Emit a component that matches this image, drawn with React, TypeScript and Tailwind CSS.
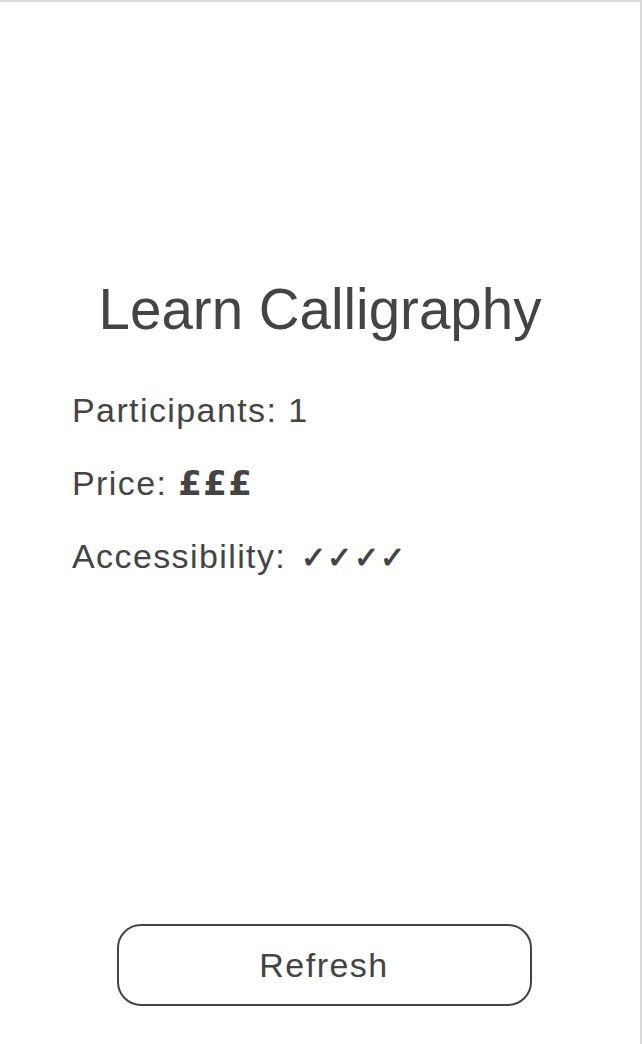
export default function App() {
  return (
    <div className="min-h-[1044px] w-[642px] border-t-2 border-r-2 border-[#d9d9d9] bg-white font-['Liberation_Sans',Arial,sans-serif] text-[#444444]">
      <div className="flex flex-col">
        <h1 className="pt-[276px] text-center text-[56.5px] leading-[64px]">Learn Calligraphy</h1>
        <div className="mt-[48px] flex flex-col gap-[33px] pl-[72px] text-[34px] leading-[40px] tracking-[1.4px]">
          <p>Participants: 1</p>
          <p>
            Price: <span className="font-['DejaVu_Sans',sans-serif] font-bold">£££</span>
          </p>
          <p>
            Accessibility: <span className="ml-[4px] text-[30px] font-bold">✓✓✓✓</span>
          </p>
        </div>
        <div className="mt-[346px] flex justify-center pl-[8px]">
          <button className="h-[82px] w-[415px] rounded-[24px] border-2 border-[#444444] text-[34px] tracking-[1.5px]">
            Refresh
          </button>
        </div>
      </div>
    </div>
  );
}
